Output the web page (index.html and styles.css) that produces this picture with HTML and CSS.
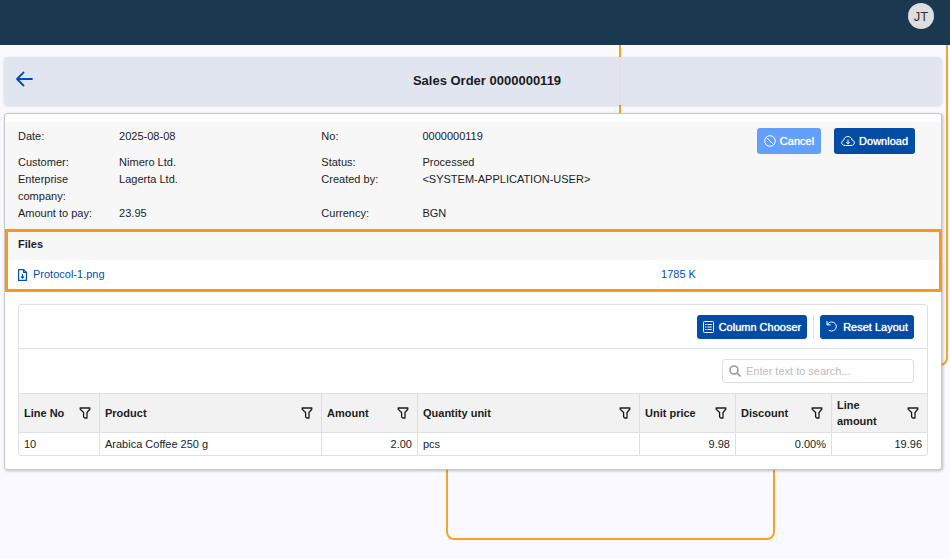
FILE: index.html
```html
<!DOCTYPE html>
<html lang="en">
<head>
<meta charset="utf-8">
<meta name="viewport" content="width=device-width, initial-scale=1">
<title>Sales Order 0000000119</title>
<link rel="stylesheet" href="styles.css">
</head>
<body>
<svg class="symbols" aria-hidden="true">
  <symbol id="filter" viewBox="0 0 12 12"><path d="M1.200 1h9.600v1.300L8 5.500V11H5.800L4.600 10V5.500L1.200 2.300z" fill="none" stroke="currentColor" stroke-width="1.300" stroke-linejoin="round"/></symbol>
</svg>
<header class="topbar">
  <button class="avatar" type="button" aria-label="Account JT">JT</button>
</header>
<main class="page">
  <div class="decor decor-upper"></div>
  <div class="decor decor-lower"></div>

  <section class="titlebar">
    <a class="back" href="#" aria-label="Back">
      <svg width="18" height="16" viewBox="0 0 18 16" fill="none" stroke="currentColor" stroke-width="1.800" stroke-linecap="round" stroke-linejoin="round"><path d="M7.500 1.500 1 8 7.500 14.500M1 8H16"/></svg>
    </a>
    <h1>Sales Order 0000000119</h1>
  </section>

  <article class="card">
    <section class="details">
      <dl class="fields">
        <dt class="lead">Date:</dt><dd>2025-08-08</dd><dt>No:</dt><dd>0000000119</dd>
        <dt>Customer:</dt><dd>Nimero Ltd.</dd><dt>Status:</dt><dd>Processed</dd>
        <dt>Enterprise company:</dt><dd>Lagerta Ltd.</dd><dt>Created by:</dt><dd>&lt;SYSTEM-APPLICATION-USER&gt;</dd>
        <dt>Amount to pay:</dt><dd>23.95</dd><dt>Currency:</dt><dd>BGN</dd>
      </dl>
      <div class="actions">
        <button class="btn btn-tall" type="button" disabled>
          <svg width="12" height="12" viewBox="0 0 12 12" fill="none" stroke="currentColor"><circle cx="6" cy="6" r="5.300"/><path d="m2.300 2.300 7.400 7.400"/></svg>
          Cancel
        </button>
        <button class="btn btn-tall" type="button">
          <svg width="14" height="12" viewBox="0 0 14 12" fill="none" stroke="currentColor" stroke-linecap="round" stroke-linejoin="round"><path d="M4 10.500C2 10.500.7 9.300.7 7.700c0-1.300.9-2.300 2.100-2.600C3.200 2.800 4.800 1.500 6.900 1.500c2.100 0 3.800 1.400 4 3.500 1.400.2 2.400 1.200 2.400 2.700 0 1.600-1.200 2.800-2.900 2.800z"/><path d="M7 5v3.800M5.500 7.400 7 8.900l1.500-1.500"/></svg>
          Download
        </button>
      </div>
    </section>

    <section class="files">
      <h2>Files</h2>
      <div class="file">
        <a href="#">
          <svg width="9" height="12" viewBox="0 0 9 12" fill="none" stroke="currentColor" stroke-width="1.200" stroke-linejoin="round"><path d="M.6.600h5L8.400 3.400v8H.6z"/><path d="M5.600.600v2.800h2.800M4.500 5v4M3 7.600l1.500 1.500L6 7.600"/></svg>
          Protocol-1.png
        </a>
        <a href="#">1785 K</a>
      </div>
    </section>

    <section class="grid">
      <div class="toolbar">
        <button class="btn" type="button">
          <svg width="11" height="12" viewBox="0 0 11 12" fill="none" stroke="currentColor"><rect x=".5" y=".5" width="10" height="11" rx="1"/><path d="M2.200 3.500h1.300M4.500 3.500h4.300M2.200 6h1.300M4.500 6h4.300M2.200 8.500h1.300M4.500 8.500h4.300"/></svg>
          Column Chooser
        </button>
        <span class="divider"></span>
        <button class="btn" type="button">
          <svg width="12" height="12" viewBox="0 0 12 12" fill="none" stroke="currentColor" stroke-linecap="round" stroke-linejoin="round"><path d="M1 .5v3.300h3.300M1.200 3.600C2.200 2 3.600 1 5.500 1 8.200 1 10.300 3 10.300 5.500s-2.100 4.500-4.800 4.500c-1 0-1.700-.2-2.400-.6"/></svg>
          Reset Layout
        </button>
      </div>
      <div class="searchrow">
        <label class="search">
          <svg width="12" height="12" viewBox="0 0 12 12" fill="none" stroke="currentColor" stroke-width="1.600"><circle cx="5" cy="5" r="4"/><path d="m8 8 3.500 3.500"/></svg>
          <input type="search" aria-label="Search" placeholder="Enter text to search...">
        </label>
      </div>
      <table>
        <colgroup><col class="c-no"><col><col class="c-num"><col><col class="c-num"><col class="c-num"><col class="c-last"></colgroup>
        <thead>
          <tr>
            <th><div class="head">Line No<button type="button" aria-label="Filter line no"><svg width="12" height="12"><use href="#filter"/></svg></button></div></th>
            <th><div class="head">Product<button type="button" aria-label="Filter product"><svg width="12" height="12"><use href="#filter"/></svg></button></div></th>
            <th><div class="head">Amount<button type="button" aria-label="Filter amount"><svg width="12" height="12"><use href="#filter"/></svg></button></div></th>
            <th><div class="head">Quantity unit<button type="button" aria-label="Filter quantity unit"><svg width="12" height="12"><use href="#filter"/></svg></button></div></th>
            <th><div class="head">Unit price<button type="button" aria-label="Filter unit price"><svg width="12" height="12"><use href="#filter"/></svg></button></div></th>
            <th><div class="head">Discount<button type="button" aria-label="Filter discount"><svg width="12" height="12"><use href="#filter"/></svg></button></div></th>
            <th><div class="head">Line amount<button type="button" aria-label="Filter line amount"><svg width="12" height="12"><use href="#filter"/></svg></button></div></th>
          </tr>
        </thead>
        <tbody>
          <tr><td>10</td><td>Arabica Coffee 250 g</td><td class="num">2.00</td><td>pcs</td><td class="num">9.98</td><td class="num">0.00%</td><td class="num">19.96</td></tr>
        </tbody>
      </table>
    </section>
  </article>
</main>
</body>
</html>
```
FILE: styles.css
```css
* { box-sizing: border-box; }

body {
  margin: 0;
  min-height: 100vh;
  display: flex;
  flex-direction: column;
  background: #f9f9ff;
  color: #1a1c1e;
  font: 11px/17px "Liberation Sans", Arial, sans-serif;
}

button, input { font: inherit; }
a { color: #004fae; text-decoration: none; }
h1, h2, dl, dd { margin: 0; }
.symbols { position: absolute; width: 0; height: 0; }

.topbar {
  display: flex;
  justify-content: flex-end;
  padding: 3px 16px 16px;
  background: #1a3850;
}

.avatar {
  width: 26px;
  height: 26px;
  padding: 0;
  border: 0;
  border-radius: 50%;
  background: #dedede;
  color: #333;
  font-size: 13px;
}

.page {
  position: relative;
  flex: 1;
  padding: 12px 8px 20px 4px;
  overflow: hidden;
}

/* Outlined shapes behind the content */
.decor {
  position: absolute;
  width: 329px;
  border: 2px solid #f7a325;
}
.decor-upper {
  top: -10px;
  right: 2px;
  height: 331px;
  border-radius: 8px;
}
.decor-lower {
  top: 300px;
  right: 175px;
  height: 195px;
  border-radius: 8px;
}

.titlebar {
  position: relative;
  display: grid;
  grid-template-columns: 28px 1fr;
  align-items: center;
  height: 48px;
  padding: 0 0 2px 12px;
  border-radius: 4px;
  background: rgba(224, 228, 239, .97);
  box-shadow: 0 1px 3px rgba(0, 0, 0, .15);
}
.titlebar h1 {
  padding-right: 12px;
  font-size: 13px;
  text-align: center;
}
.back { display: flex; padding-bottom: 3px; }

.card {
  position: relative;
  margin-top: 8px;
  padding: 8px 0 13px;
  border: 1px solid #c8c8cc;
  border-radius: 3px;
  background: #fff;
  box-shadow: 1px 1px 3px rgba(0, 0, 0, .25);
}

.details {
  display: grid;
  grid-template-columns: 7fr 2fr;
  padding: 6px 13px 7px;
  border-radius: 4px 4px 0 0;
  background: #f7f7f7;
}
.fields {
  display: grid;
  grid-template-columns: 1fr 2fr 1fr 3fr;
  align-content: start;
}
.fields dt { padding-right: 8px; }
.fields .lead { padding-bottom: 9px; }
.actions {
  display: flex;
  justify-content: flex-end;
  align-items: flex-start;
  gap: 13px;
  padding-right: 13px;
}

.btn {
  display: flex;
  align-items: center;
  gap: 5px;
  height: 24px;
  padding: 0 6px;
  border: 0;
  border-radius: 3px;
  background: #034ca5;
  color: #fff;
  text-shadow: 0 0 1px #fff;
  white-space: nowrap;
}
.btn-tall { height: 26px; padding: 0 7px; gap: 4px; }
.btn:disabled { background: #639ffc; }

.files {
  margin: 0 -1px 12px 0;
  border: 3px solid #f8991d;
}
.files h2 {
  padding: 4px 10px 7px;
  background: #f7f7f7;
  font-size: 11px;
}
.file {
  display: grid;
  grid-template-columns: 12fr 5fr;
  padding: 6px 10px;
}
.file a { display: flex; align-items: center; gap: 6px; }

.grid {
  margin: 0 13px;
  border: 1px solid #dcdfe4;
  border-radius: 3px;
}
.toolbar, .searchrow {
  display: flex;
  justify-content: flex-end;
  padding: 10px 13px;
}
.toolbar { gap: 6px; padding-bottom: 9px; border-bottom: 1px solid #dcdfe4; }
.divider { width: 1px; background: #dcdfe4; }
.search {
  display: flex;
  align-items: center;
  gap: 5px;
  width: 192px;
  height: 24px;
  padding: 0 6px;
  border: 1px solid #dcdfe4;
  border-radius: 3px;
  color: #999;
}
.search input {
  flex: 1;
  min-width: 0;
  padding: 0;
  border: 0;
  outline: 0;
  background: none;
}
.search input::placeholder { color: #bbb; }

table {
  width: 100%;
  table-layout: fixed;
  border-collapse: separate;
  border-spacing: 0;
  line-height: 16px;
}
.c-no { width: 81px; }
.c-num { width: 96px; }
.c-last { width: 95px; }
th, td {
  padding: 3px 5px;
  border-right: 1px solid #dcdfe4;
  text-align: left;
}
th:last-child, td:last-child { border-right: 0; }
th {
  border-top: 1px solid #dcdfe4;
  border-bottom: 1px solid #dcdfe4;
  background: #f2f2f2;
}
.head {
  display: flex;
  align-items: center;
  justify-content: space-between;
  gap: 8px;
}
.head button {
  display: flex;
  padding: 0 3px;
  border: 0;
  background: none;
  color: #1a1c1e;
}
td.num { text-align: right; }
```
